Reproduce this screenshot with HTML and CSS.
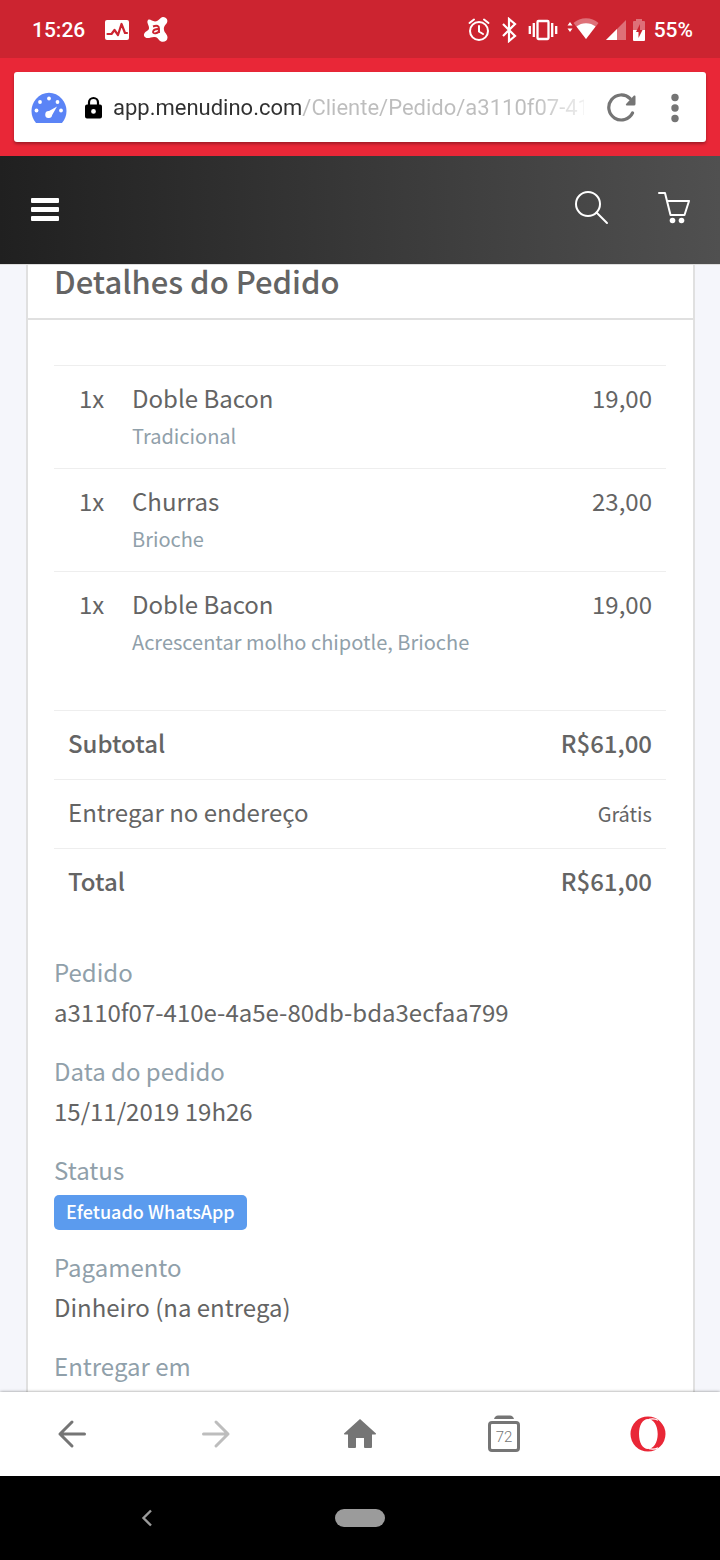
FILE: index.html
```html
<!DOCTYPE html>
<html lang="pt-BR">
<head>
<meta charset="utf-8">
<meta name="viewport" content="width=device-width, initial-scale=1">
<title>Detalhes do Pedido</title>
<link rel="stylesheet" href="styles.css">
</head>
<body>
<div class="status-bar">
  <time class="clock">15:26</time>
  <svg class="status-left-icon" width="26" height="26" viewBox="0 0 26 26"><rect x="1" y="3" width="24" height="20" rx="2" fill="#fff"/><path d="M3.500 17h4l3-4 3.500 5 3.500-11 3.500 9h2" fill="none" stroke="#cc2430" stroke-width="2.200" stroke-linejoin="round" stroke-linecap="round"/></svg>
  <svg width="26" height="26" viewBox="0 0 26 26"><path d="M5 3C7 1.500 9 4.500 12 4.500c4 0 5-4.500 8-4.500 4 0 5.500 4 3.500 6.500C22 8.500 20.500 9.500 21 13c.4 3 3.500 4 3.500 7.500 0 4.500-5.500 5.500-8 3-1.600-2-3-4-5.500-3.500-2.500.3-4 1-6.500 1C1.500 21 .3 18.500 1.300 16.500 2.500 14 5.500 14 6 11.500 6.500 8.500 3 5.500 5 3z" fill="#fff"/><path d="M10 9.500c4-1.500 6-.5 6 2v4.500M16 12c-7-.500-7.500 5-3.300 4.300 2-.3 3.300-1.500 3.300-3" fill="none" stroke="#cc2430" stroke-width="1.900"/></svg>
  <div class="status-right">
    <svg width="22" height="26" viewBox="0 0 22 26" fill="none" stroke="#fff" stroke-width="2" stroke-linecap="round"><circle cx="11" cy="14" r="9"/><path d="M11 9v5.500l4 2.500M1.500 6L6 2.500M20.500 6L16 2.500"/></svg>
    <svg class="bluetooth" width="16" height="26" viewBox="0 0 16 26" fill="none" stroke="#fff" stroke-width="2.200"><path d="M2 7l12 12-6 5V2l6 5L2 19"/></svg>
    <svg width="30" height="26" viewBox="0 0 30 26" fill="none" stroke="#fff" stroke-width="2.300"><rect x="9.500" y="4" width="11" height="18" rx="1"/><path d="M5.800 6v14M1.800 9v8M24.200 6v14M28.200 9v8"/></svg>
    <svg width="34" height="26" viewBox="0 0 34 26"><path d="M2.500 8.500L5 5l2.500 3.500zM2.500 11.500L5 15l2.500-3.500z" fill="#fff"/><path d="M8.500 6C15-.5 27-.5 33.500 6L21 22z" fill="#fff" opacity=".35"/><path d="M11.500 9.500c5-4.500 14-4.500 19 0L21 22z" fill="#fff"/></svg>
    <svg width="20" height="26" viewBox="0 0 20 26"><path d="M0 23L20 3v20z" fill="#fff" opacity=".35"/><path d="M0 23L11 12v11z" fill="#fff"/></svg>
    <svg width="12" height="26" viewBox="0 0 12 26"><path d="M0 5q0-1 1-1h2V2h6v2h2q1 0 1 1v8H0z" fill="#fff" opacity=".35"/><path d="M0 13h12v10q0 1-1 1H1q-1 0-1-1z" fill="#fff"/><path d="M7 7L3 15H5.500V21L9.500 13H7z" fill="#cc2430"/></svg>
    <span class="battery-level">55%</span>
  </div>
</div>

<div class="browser-bar">
  <div class="address">
    <button class="icon-button" aria-label="Speed Dial"><svg width="36" height="32" viewBox="0 0 36 32"><path d="M5 31C-1 24-1 14 5 7 12-1.500 24-1.500 31 7c6 7 6 17 0 24z" fill="#5b84f6"/><g fill="#fff"><circle cx="5.500" cy="18.500" r="1.900"/><circle cx="9" cy="10" r="1.900"/><circle cx="18" cy="6.500" r="1.900"/><circle cx="26.500" cy="10" r="1.900"/><circle cx="30" cy="18.500" r="1.900"/><path d="M26 14.500l-4.800 8.500a3.500 3.500 0 1 1-3.200-4z"/></g></svg></button>
    <svg class="lock" width="17" height="24" viewBox="0 0 17 24"><path d="M4 10V6.500a4.500 4.500 0 0 1 9 0V10" fill="none" stroke="#000" stroke-width="2.200"/><path fill-rule="evenodd" d="M2 8.500h13q2 0 2 2v10q0 2-2 2H2q-2 0-2-2v-10q0-2 2-2zM8.500 13a2.400 2.400 0 1 0 0 4.800 2.400 2.400 0 0 0 0-4.800z" fill="#000"/></svg>
    <input class="url" type="text" aria-label="Endereço" value="app.menudino.com/Cliente/Pedido/a3110f07-410e-4a5e">
    <button class="icon-button reload" aria-label="Recarregar"><svg width="30" height="30" viewBox="0 0 30 30"><path d="M25.500 20A12.500 12.500 0 1 1 23 5.500" fill="none" stroke="#757575" stroke-width="3.200" stroke-linecap="round"/><path d="M27 2.500q1.500-.5 1.500 1V11q0 1.500-1.500 1.500h-7.500q-1.500-.5 0-2z" fill="#757575"/></svg></button>
    <button class="icon-button" aria-label="Mais opções"><svg width="8" height="30" viewBox="0 0 8 30" fill="#757575"><circle cx="4" cy="4.500" r="3.700"/><circle cx="4" cy="15" r="3.700"/><circle cx="4" cy="25.500" r="3.700"/></svg></button>
  </div>
</div>

<header class="site-header">
  <button class="icon-button" aria-label="Menu"><svg width="28" height="24" viewBox="0 0 28 24" fill="#fff"><rect y="0" width="28" height="5" rx="1"/><rect y="9" width="28" height="5" rx="1"/><rect y="18" width="28" height="5" rx="1"/></svg></button>
  <div class="site-actions">
    <button class="icon-button" aria-label="Buscar"><svg width="34" height="34" viewBox="0 0 34 34" fill="none" stroke="#fff" stroke-width="2" stroke-linecap="round"><circle cx="13" cy="13" r="12"/><path d="M21.500 21.500l10.500 10.500"/></svg></button>
    <button class="icon-button" aria-label="Carrinho"><svg width="32" height="34" viewBox="0 0 32 34" fill="none" stroke="#fff" stroke-width="2" stroke-linecap="round" stroke-linejoin="round"><path d="M1 2h6l5.500 22h14L31 10H9.500"/><g fill="#fff" stroke="none"><circle cx="14.500" cy="29.500" r="2.800"/><circle cx="23.500" cy="29.500" r="2.800"/></g></svg></button>
  </div>
</header>

<main class="page">
  <section class="card">
    <h1 class="card-title">Detalhes do Pedido</h1>
    <div class="card-body">
      <table class="items">
        <tr><td class="qty">1x</td><td>Doble Bacon<div class="note">Tradicional</div></td><td class="price">19,00</td></tr>
        <tr><td class="qty">1x</td><td>Churras<div class="note">Brioche</div></td><td class="price">23,00</td></tr>
        <tr><td class="qty">1x</td><td>Doble Bacon<div class="note">Acrescentar molho chipotle, Brioche</div></td><td class="price">19,00</td></tr>
      </table>
      <table class="totals">
        <tr class="strong"><th scope="row">Subtotal</th><td class="price">R$61,00</td></tr>
        <tr><th scope="row">Entregar no endereço</th><td class="price free">Grátis</td></tr>
        <tr class="strong"><th scope="row">Total</th><td class="price">R$61,00</td></tr>
      </table>
      <dl class="details">
        <div><dt>Pedido</dt><dd>a3110f07-410e-4a5e-80db-bda3ecfaa799</dd></div>
        <div><dt>Data do pedido</dt><dd>15/11/2019 19h26</dd></div>
        <div><dt>Status</dt><dd class="status"><span class="badge">Efetuado WhatsApp</span></dd></div>
        <div><dt>Pagamento</dt><dd>Dinheiro (na entrega)</dd></div>
        <div><dt>Entregar em</dt></div>
      </dl>
    </div>
  </section>
</main>

<nav class="toolbar">
  <button class="icon-button" aria-label="Voltar"><svg width="30" height="30" viewBox="0 0 30 30" fill="none" stroke="#757575" stroke-width="3" stroke-linecap="round" stroke-linejoin="round"><path d="M27.500 15H3M15 3L3 15l12 12"/></svg></button>
  <button class="icon-button" aria-label="Avançar" disabled><svg width="30" height="30" viewBox="0 0 30 30" fill="none" stroke="#bdbdbd" stroke-width="3" stroke-linecap="round" stroke-linejoin="round"><path d="M2.500 15H27M15 3l12 12-12 12"/></svg></button>
  <button class="icon-button" aria-label="Início"><svg width="34" height="30" viewBox="0 0 34 30"><path d="M17 0L33 14.500q.5 1-1 1h-3V28q0 1-1 1h-6q-1 0-1-1v-9h-8v9q0 1-1 1H6q-1 0-1-1V15.500H2q-1.500 0-1-1z" fill="#757575"/></svg></button>
  <button class="icon-button tabs" aria-label="72 abas"><svg width="32" height="38" viewBox="0 0 32 38"><path d="M6 4q1-3.500 4-3.500h12q3 0 4 3.500z" fill="#757575"/><rect x="1.500" y="7.500" width="29" height="28" rx="2.500" fill="none" stroke="#757575" stroke-width="3"/></svg><span class="tab-count">72</span></button>
  <button class="icon-button" aria-label="Opera"><svg width="36" height="36" viewBox="0 0 36 36" fill="#e92737"><path fill-rule="evenodd" d="M18 .5a17.500 17.500 0 1 0 0 35 17.500 17.500 0 0 0 0-35zM18 3c5.500 0 9.700 6.500 9.700 15S23.500 33 18 33 9 26.500 9 18 12.500 3 18 3z"/><path d="M19 3.300c3.500-.8 6.500-.5 9 1M19 32.700c3.500.8 6.500.5 9-1" fill="none" stroke="#fff" stroke-width="1.200"/></svg></button>
</nav>

<div class="system-nav">
  <button class="icon-button" aria-label="Voltar do sistema"><svg width="12" height="18" viewBox="0 0 12 18"><path d="M10 1.500L2.500 9l7.500 7.500" fill="none" stroke="#9b9b9b" stroke-width="2.400"/></svg></button>
  <button class="home-pill" aria-label="Tela inicial"></button>
</div>
</body>
</html>
```
FILE: styles.css
```css
* { box-sizing: border-box; }
body {
  margin: 0;
  height: 100vh;
  display: flex;
  flex-direction: column;
  overflow: hidden;
  background: #f5f6fb;
  color: #646464;
  font: 24px/40px "Noto Sans CJK SC", sans-serif;
}
svg { display: block; flex: none; }
.icon-button {
  display: flex;
  align-items: center;
  justify-content: center;
  flex: none;
  padding: 0;
  border: 0;
  background: none;
}

.status-bar {
  flex: none;
  display: flex;
  align-items: center;
  height: 58px;
  padding: 2px 27px 0 32px;
  background: #cc2430;
  color: #fff;
  font: 500 21px/24px Roboto, sans-serif;
}
.clock { margin-right: 19px; }
.status-left-icon { margin-right: 13px; }
.status-right {
  display: flex;
  align-items: center;
  gap: 7px;
  margin-left: auto;
}
.bluetooth { margin: 0 4px; }
.battery-level { margin-left: 2px; }

.browser-bar {
  flex: none;
  padding: 14px;
  background: #e92737;
}
.address {
  display: flex;
  align-items: center;
  height: 70px;
  padding: 2px 27px 0 17px;
  border-radius: 3px;
  background: #fff;
  box-shadow: 0 2px 3px rgba(0, 0, 0, .3);
}
.lock { margin: 0 11px 0 18px; }
.url {
  flex: 1;
  min-width: 0;
  height: 40px;
  padding: 0;
  border: 0;
  outline: 0;
  color: transparent;
  background: linear-gradient(90deg, #303030 189px, #bdbdbd 189px, #bdbdbd calc(100% - 50px), #f0f0f0);
  -webkit-background-clip: text;
  background-clip: text;
  font: 22px/40px Roboto, sans-serif;
}
.reload { margin: 0 34px 0 23px; }

.site-header {
  flex: none;
  display: flex;
  align-items: center;
  justify-content: space-between;
  height: 108px;
  padding: 0 30px 0 31px;
  background: linear-gradient(90deg, #202020, #505050);
}
.site-actions { display: flex; gap: 49px; padding-bottom: 4px; }

.page {
  flex: 1;
  min-height: 0;
  overflow: hidden;
  border-top: 1px solid #ddd;
}
.card {
  margin: 0 25px 0 26px;
  padding-bottom: 26px;
  border: solid #e0e0e0;
  border-width: 0 2px;
  background: #fff;
}
.card-title {
  margin: 0;
  padding: 0 26px 22px;
  border-bottom: 2px solid #e0e0e0;
  font-size: 31px;
  line-height: 31px;
  font-weight: 500;
}
.card-body { padding: 45px 27px 0 26px; }

table { width: 100%; border-collapse: collapse; }
td, th {
  padding: 14px;
  border-top: 1px solid #eee;
  text-align: left;
  vertical-align: top;
  font-weight: 400;
}
.items { line-height: 36px; margin-bottom: 36px; }
.items td { padding-bottom: 12px; }
.items .qty { width: 64px; padding: 14px 0 12px 25px; }
.note { color: #90a0aa; font-size: 20px; line-height: 40px; }
.price { text-align: right; }
.items .price { padding-left: 0; }
.totals td, .totals th { padding: 12px 14px 16px; }
.strong th, .strong td { font-weight: 500; }
.totals .free { padding: 14px; font-size: 20px; }

.details { margin: 35px 0 0; display: flex; flex-direction: column; gap: 19px; }
dt { color: #90a0aa; }
dd { margin: 0; }
.status { display: flex; padding: 5px 0 0; height: 38px; }
.badge {
  height: 35px;
  padding: 0 12px;
  border-radius: 5px;
  background: #5b9bee;
  color: #fff;
  font-size: 18px;
  line-height: 33px;
  font-weight: 500;
}

.toolbar {
  flex: none;
  position: relative;
  display: grid;
  grid-template-columns: repeat(5, 1fr);
  height: 84px;
  background: #fff;
  box-shadow: 0 0 3px rgba(0, 0, 0, .45);
}
.tabs { display: grid; place-content: center; place-items: center; }
.tabs svg, .tab-count { grid-area: 1 / 1; }
.tab-count { padding-top: 5px; color: #757575; font: 300 15px/18px Roboto, sans-serif; }

.system-nav {
  flex: none;
  display: grid;
  grid-template-columns: 294px 1fr 294px;
  align-items: center;
  justify-items: center;
  height: 84px;
  background: #000;
}
.home-pill { width: 50px; height: 18px; padding: 0; border: 0; border-radius: 9px; background: #9b9b9b; }
```
